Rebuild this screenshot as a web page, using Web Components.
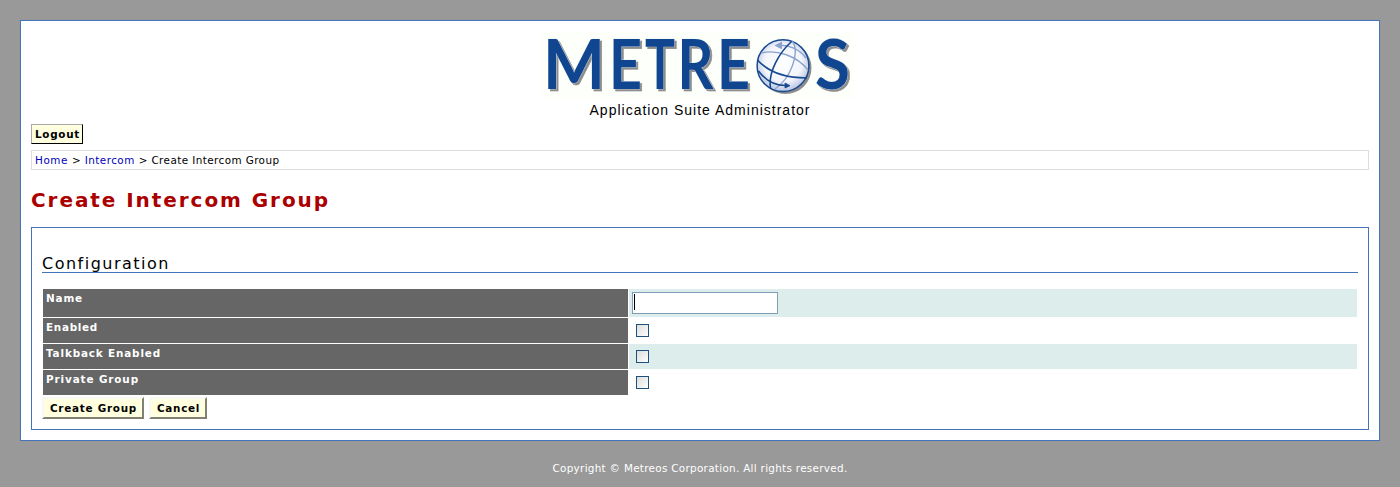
<!DOCTYPE html>
<html lang="en"><head><meta charset="utf-8"><title>Create Intercom Group</title>
<style>html,body{margin:0}body{background:#999;font:10.4px/13px "DejaVu Sans",Verdana,sans-serif;color:#000}</style></head>
<body><intercom-page></intercom-page>
<script>
const define=(name,html,init)=>customElements.define(name,class extends HTMLElement{
 constructor(){super();this.attachShadow({mode:'open'}).innerHTML=html;if(init)init.call(this,this.shadowRoot)}
});
define('brand-logo',`<style>:host{display:block;width:313px;height:68px;margin:0 auto;background:#fdfffb}svg{display:block;overflow:visible}
text{font:bold 68px/1 Lato,sans-serif}.b{fill:#10458f;stroke:#dce8f5;stroke-width:.6;paint-order:stroke;filter:drop-shadow(2.5px 2.5px 0 #8d8d8d)}</style>
<svg width="313" height="68" viewBox="541 31 313 68">
<defs><radialGradient id="g" cx=".5" cy=".45" r=".55"><stop offset="0" stop-color="#fff"/><stop offset=".65" stop-color="#f3f5fb"/><stop offset="1" stop-color="#b8c4e2"/></radialGradient></defs>
<g class="b" id="fr"></g>
<circle cx="785.5" cy="68" r="26" fill="#8d8d8d"/>
<circle cx="783" cy="65.7" r="25.9" fill="url(#g)" stroke="#17498f" stroke-width="1.5"/>
<g fill="none" stroke="#8aa2cc" stroke-width="1.4"><path d="M777 45.5C789 44 800 50 806 58M761 53C777 49 797 56 808 70M792.5 41C800 53 791 78 775 89"/><path d="m782 42.5-6 3 6 3" fill="#8aa2cc"/></g>
<g fill="none" stroke="#17498f" stroke-width="1.6"><path d="M757.5 60C769 73 786 78 807 78M791.5 41.5C779 53 768 72 770.5 88M758.5 71C766 81 775 86 787 85.5"/><path d="m785 83 5 2.7-5 2.3z" fill="#17498f" stroke-width=".8"/></g>
</svg>`,function(r){
 const letters=[['M',543,62],['E',609,33],['T',645,30],['R',677.5,36],['E',717,33],['S',815,35]];
 const NS='http://www.w3.org/2000/svg';
 for(const [c,x,w] of letters){
  const t=document.createElementNS(NS,'text');t.textContent=c;r.getElementById('fr').append(t);
  t.setAttribute('x',x);t.setAttribute('y',89);t.setAttribute('textLength',w);t.setAttribute('lengthAdjust','spacingAndGlyphs');
 }});
define('page-header',`<style>:host{display:block;text-align:center}div{padding-right:5px}p{margin:3px 0 0;height:16px;font:14px/16px "Liberation Sans",Arial,sans-serif}</style>
<div><brand-logo></brand-logo></div><p><fit-text width="221">Application Suite Administrator</fit-text></p>`);
define('x-button',`<style>:host{display:inline-block}button{display:block;box-sizing:border-box;margin:0;padding:1px 0 0 6px;text-align:left;height:22px;width:100%;border:2px solid;border-color:#f8f8f4 #808074 #808074 #f8f8f4;background:#ffffdf;color:#000;font:bold 10.4px/17px "DejaVu Sans",Verdana,sans-serif}
:host([thin]) button{height:20px;border:1px solid;border-color:#aaa #000 #000 #aaa;padding-left:3px}</style><button><slot></slot></button>`);
define('bread-crumbs',`<style>:host{display:flex;gap:4px;box-sizing:border-box;height:20px;border:1px solid #ddd;padding:0 3px;line-height:19px}a{color:#00b;text-decoration:none}</style>
<a href="#"><fit-text width="33">Home</fit-text></a><fit-text width="8">&gt;</fit-text><a href="#"><fit-text width="50">Intercom</fit-text></a><fit-text width="8">&gt;</fit-text><fit-text width="128">Create Intercom Group</fit-text>`);
define('check-box',`<style>:host{display:block;box-sizing:border-box;width:13px;height:13px;margin:6px 0 0 5px;border:1px solid #1c5180;background:linear-gradient(135deg,#dcdcd7,#fff)}</style>`);
define('name-field',`<style>:host{display:block;box-sizing:border-box;width:146px;height:22px;margin:3px 0 0 1px;border:1px solid #7f9db9;background:#fff;padding:1px}i{display:block;width:1px;height:16px;background:#000}</style><i></i>`);
define('form-row',`<style>:host{display:grid;grid-template-columns:585px 1fr;column-gap:1px;height:25px}
:host([tall]){height:28px}.l{background:#666;color:#fff;font-weight:bold;padding:3px 3px 0}.v{display:flow-root;padding-left:2px}:host([odd]) .v{background:#dcedec}</style><div class="l"><slot name="label"></slot></div><div class="v"><slot></slot></div>`);
define('config-panel',`<style>:host{display:block;box-sizing:border-box;height:203px;border:1px solid #4374b9;padding:27px 10px 0}
h2{margin:0;height:17px;border-bottom:1px solid #4374b9;font:16px/18px "DejaVu Sans",Verdana,sans-serif}
.rows{display:flex;flex-direction:column;gap:1px;margin:16px 1px 2px}.act{display:flex;gap:5px}</style>
<h2><fit-text width="128">Configuration</fit-text></h2>
<div class="rows"><form-row tall odd><fit-text slot="label" width="37">Name</fit-text><name-field></name-field></form-row>
<form-row><fit-text slot="label" width="52">Enabled</fit-text><check-box></check-box></form-row>
<form-row odd><fit-text slot="label" width="115">Talkback Enabled</fit-text><check-box></check-box></form-row>
<form-row><fit-text slot="label" width="93">Private Group</fit-text><check-box></check-box></form-row></div>
<div class="act"><x-button style="width:102px"><fit-text width="87">Create Group</fit-text></x-button><x-button style="width:58px"><fit-text width="43">Cancel</fit-text></x-button></div>`);
define('intercom-page',`<style>:host{display:block;box-sizing:border-box;height:487px;padding:20px}
main{box-sizing:border-box;height:421px;border:1px solid #4374b9;background:#fff;padding:10px 10px 0}
x-button{display:block;width:52px;margin:6px 0 6px}h1{margin:18px 0 14px;height:25px;color:#a00;font:bold 20px/25px "DejaVu Sans",Verdana,sans-serif}
footer{margin-top:20px;text-align:center;color:#fff;line-height:14px}</style>
<main><page-header></page-header><x-button thin><fit-text width="45">Logout</fit-text></x-button><bread-crumbs></bread-crumbs><h1><fit-text width="299">Create Intercom Group</fit-text></h1><config-panel></config-panel></main>
<footer><fit-text width="295">Copyright © Metreos Corporation. All rights reserved.</fit-text></footer>`);
/* Tracks its text out so that the line, trailing tracking included, spans the requested width. */
customElements.define('fit-text',class extends HTMLElement{
 constructor(){super();this.attachShadow({mode:'open'}).innerHTML='<style>:host{display:inline-block;white-space:nowrap}</style><slot></slot>'}
 connectedCallback(){this.fit();requestAnimationFrame(()=>this.fit())}
 fit(){const n=this.textContent.length;if(n<2)return;
  this.style.letterSpacing='0px';const w=this.getBoundingClientRect().width;
  if(w)this.style.letterSpacing=(+this.getAttribute('width')-w)/n+'px';
 }
});
</script></body></html>
